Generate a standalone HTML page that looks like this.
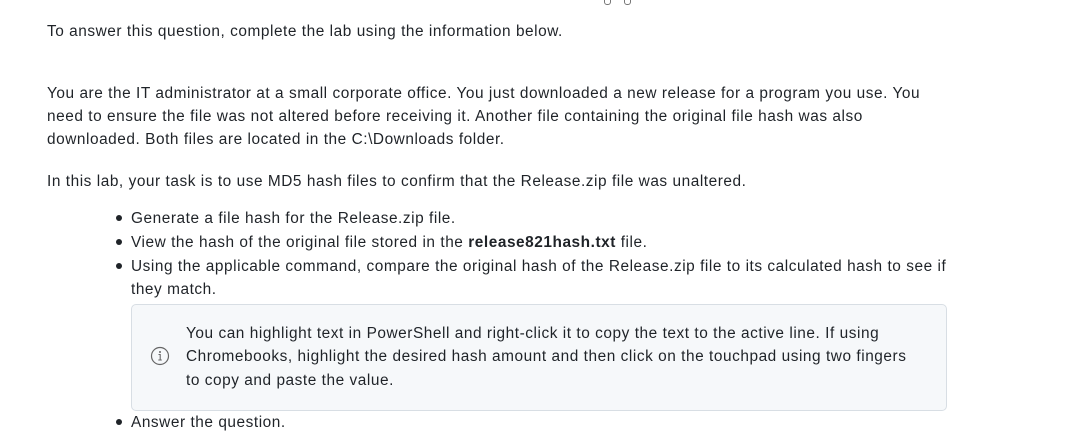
<!DOCTYPE html>
<html><head><style>
body{margin:0;background:#fff;width:1075px;height:443px;overflow:hidden;font-family:"Liberation Sans","DejaVu Sans",sans-serif;font-size:15.4px;letter-spacing:0.55px;color:#1f2328;position:relative}
.t{position:absolute;left:47px;white-space:nowrap;line-height:23px}
.b{position:absolute;left:131px;white-space:nowrap;line-height:23px}
.d{position:absolute;left:116px;width:6px;height:6px;border-radius:50%;background:#1f2328}
.box{position:absolute;left:131px;top:304px;width:814px;height:105px;background:#f6f8fa;border:1px solid #d8dee4;border-radius:5px}
</style></head><body>
<div style="position:absolute;left:604px;top:-6px;width:5px;height:9px;border:1.3px solid #777;border-radius:3px"></div>
<div style="position:absolute;left:624px;top:-6px;width:5px;height:9px;border:1.3px solid #777;border-radius:3px"></div>
<div class="t" style="top:20px">To answer this question, complete the lab using the information below.</div>
<div class="t" style="top:82px">You are the IT administrator at a small corporate office. You just downloaded a new release for a program you use. You</div>
<div class="t" style="top:105px">need to ensure the file was not altered before receiving it. Another file containing the original file hash was also</div>
<div class="t" style="top:128px">downloaded. Both files are located in the C:\Downloads folder.</div>
<div class="t" style="top:170px">In this lab, your task is to use MD5 hash files to confirm that the Release.zip file was unaltered.</div>
<div class="d" style="top:215px"></div><div class="b" style="top:207px">Generate a file hash for the Release.zip file.</div>
<div class="d" style="top:239px"></div><div class="b" style="top:231px">View the hash of the original file stored in the <b>release821hash.txt</b> file.</div>
<div class="d" style="top:263px"></div><div class="b" style="top:255px">Using the applicable command, compare the original hash of the Release.zip file to its calculated hash to see if</div>
<div class="b" style="top:278px">they match.</div>
<div class="box"></div>
<svg style="position:absolute;left:150px;top:346px" width="20" height="20" viewBox="0 0 20 20"><circle cx="10" cy="10" r="8.5" fill="none" stroke="#666" stroke-width="1.2"/><circle cx="10" cy="6" r="1" fill="#666"/><path d="M8.5 8.5h1.7v5.5M8.3 14h3.5" stroke="#666" stroke-width="1.1" fill="none"/></svg>
<div class="b" style="left:186px;top:322px">You can highlight text in PowerShell and right-click it to copy the text to the active line. If using</div>
<div class="b" style="left:186px;top:345px">Chromebooks, highlight the desired hash amount and then click on the touchpad using two fingers</div>
<div class="b" style="left:186px;top:369px">to copy and paste the value.</div>
<div class="d" style="top:419px"></div><div class="b" style="top:411px">Answer the question.</div>
</body></html>
